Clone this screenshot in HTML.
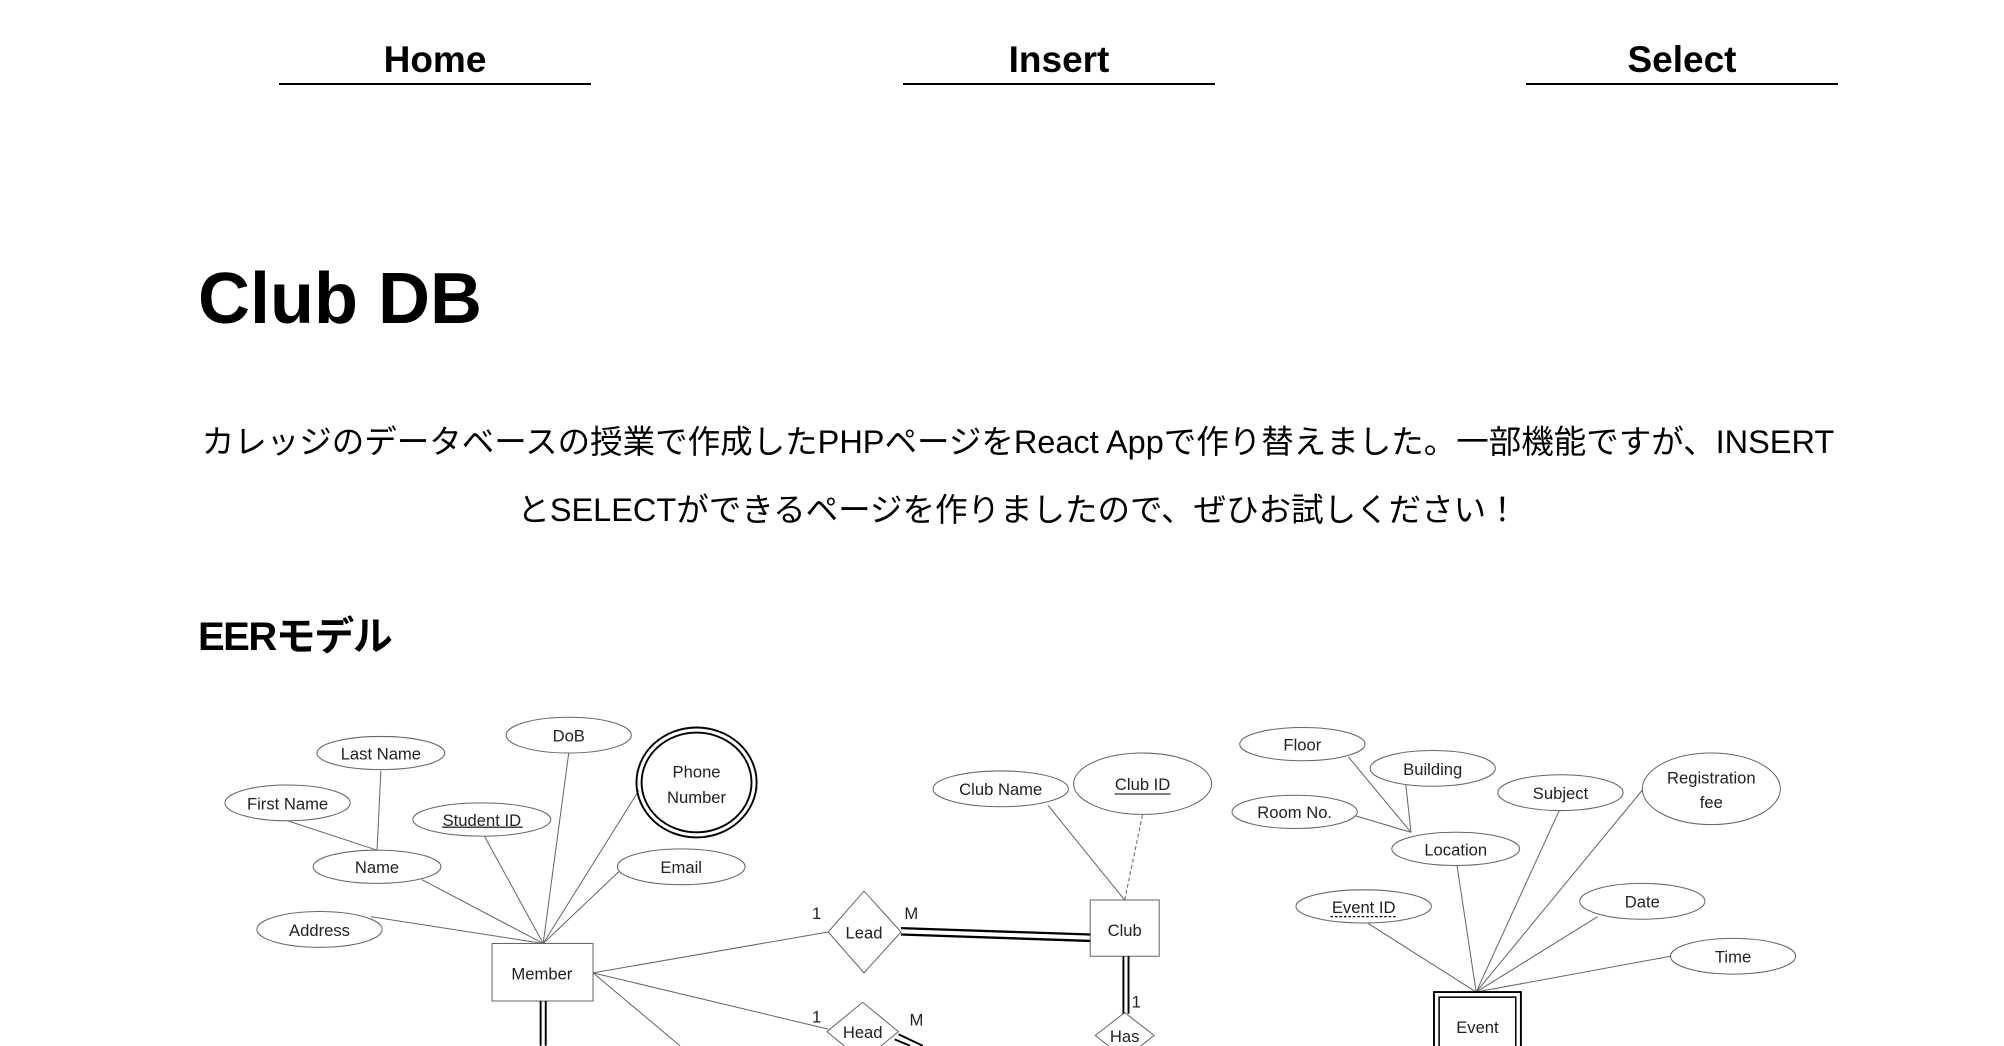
<!DOCTYPE html>
<html><head><meta charset="utf-8"><style>
body{margin:0;width:2004px;height:1046px;background:#fff;overflow:hidden;position:relative;font-family:"Liberation Sans","Noto Sans CJK JP",sans-serif;color:#000}
.nav{position:absolute;top:38px;width:312px;text-align:center;font-weight:bold;font-size:37px;line-height:44px;border-bottom:2px solid #000;padding-bottom:1px}
h1{position:absolute;left:198px;top:254px;margin:0;font-size:72px;line-height:90px;font-weight:bold}
p{position:absolute;left:140px;width:1756px;top:408px;margin:0;text-align:center;font-size:32.5px;line-height:68px;letter-spacing:0px}
h2{position:absolute;left:198px;top:612px;margin:0;font-size:40px;line-height:50px;font-weight:bold;letter-spacing:-1.5px}
svg{position:absolute;left:0;top:0}
</style></head><body>
<div class="nav" style="left:279px">Home</div>
<div class="nav" style="left:903px">Insert</div>
<div class="nav" style="left:1526px">Select</div>
<h1>Club DB</h1>
<p>カレッジのデータベースの授業で作成したPHPページをReact Appで作り替えました。一部機能ですが、INSERT<br>とSELECTができるページを作りましたので、ぜひお試しください！</p>
<h2>EERモデル</h2>
<svg width="2004" height="1046" viewBox="0 0 1568 818" font-family="Liberation Sans Narrow, Liberation Sans, sans-serif" font-size="13" text-anchor="middle">
<g fill="none" stroke="#666" stroke-width="0.8">
<line x1="425" y1="738" x2="330" y2="688"/><line x1="425" y1="738" x2="379" y2="654"/><line x1="425" y1="738" x2="445" y2="589"/><line x1="425" y1="738" x2="500" y2="618"/><line x1="425" y1="738" x2="484" y2="682"/><line x1="425" y1="738" x2="290" y2="717"/>
<line x1="295" y1="665" x2="225" y2="642"/><line x1="295" y1="665" x2="298" y2="603"/>
<line x1="464" y1="761" x2="648" y2="729"/><line x1="464" y1="761" x2="648" y2="805"/><line x1="464" y1="761" x2="532" y2="818"/>
<line x1="880" y1="704" x2="820" y2="630"/><line x1="880" y1="704" x2="894" y2="637" stroke-dasharray="3,2"/>
<line x1="1055" y1="592" x2="1104" y2="651"/><line x1="1100" y1="614" x2="1104" y2="651"/><line x1="1060" y1="638" x2="1104" y2="651"/>
<line x1="1140" y1="677" x2="1155" y2="776"/><line x1="1220" y1="634" x2="1155" y2="776"/><line x1="1285" y1="618" x2="1155" y2="776"/><line x1="1070" y1="722" x2="1155" y2="776"/><line x1="1250" y1="717" x2="1155" y2="776"/><line x1="1307" y1="748" x2="1155" y2="776"/>
<ellipse cx="298" cy="589" rx="50" ry="13"/><ellipse cx="445" cy="575" rx="49" ry="14"/><ellipse cx="225" cy="628" rx="49" ry="14"/><ellipse cx="377" cy="641" rx="54" ry="13"/><ellipse cx="295" cy="678" rx="50" ry="13"/><ellipse cx="533" cy="678" rx="50" ry="14"/><ellipse cx="250" cy="727" rx="49" ry="14"/>
<ellipse cx="783" cy="617" rx="53" ry="14"/><ellipse cx="894" cy="613" rx="54" ry="24"/>
<ellipse cx="1019" cy="582" rx="49" ry="13"/><ellipse cx="1121" cy="601" rx="49" ry="14"/><ellipse cx="1013" cy="635" rx="49" ry="13"/><ellipse cx="1139" cy="664" rx="50" ry="13"/><ellipse cx="1221" cy="620" rx="49" ry="14"/><ellipse cx="1339" cy="617" rx="54" ry="28"/>
<ellipse cx="1067" cy="709" rx="53" ry="13"/><ellipse cx="1285" cy="705" rx="49" ry="14"/><ellipse cx="1356" cy="748" rx="49" ry="14"/>
<rect x="385" y="738" width="79" height="45"/><rect x="853" y="704" width="54" height="44"/>
<polygon points="648,729 676,697 705,729 676,761"/><polygon points="647,807 675,784 703,807 675,830"/><polygon points="857,810 880,792 903,810 880,828"/>
</g>
<g fill="none" stroke="#000">
<ellipse cx="545" cy="612" rx="47" ry="43" stroke-width="1.5"/><ellipse cx="545" cy="612" rx="43" ry="39" stroke-width="1.5"/>
<line x1="423" y1="783" x2="423" y2="818" stroke-width="1.5"/><line x1="427" y1="783" x2="427" y2="818" stroke-width="1.5"/>
<line x1="705" y1="726" x2="853" y2="731" stroke-width="1.8"/><line x1="705" y1="731" x2="853" y2="736" stroke-width="1.8"/>
<line x1="879" y1="748" x2="879" y2="793" stroke-width="1.5"/><line x1="883" y1="748" x2="883" y2="793" stroke-width="1.5"/>
<line x1="700" y1="813" x2="712" y2="818" stroke-width="1.5"/><line x1="703" y1="809" x2="722" y2="818" stroke-width="1.5"/>
<rect x="1122" y="776" width="68" height="60" stroke-width="1.5"/><rect x="1126" y="780" width="60" height="56" stroke-width="1.2"/>
<line x1="346" y1="647" x2="409" y2="647" stroke-width="0.8"/><line x1="872" y1="621" x2="916" y2="621" stroke-width="0.8"/>
<line x1="1041" y1="717" x2="1093" y2="717" stroke-width="1" stroke-dasharray="2,1.5"/>
</g>
<g fill="#222">
<text x="298" y="594">Last Name</text><text x="445" y="580">DoB</text><text x="545" y="608">Phone</text><text x="545" y="628">Number</text>
<text x="225" y="633">First Name</text><text x="377" y="646">Student ID</text><text x="295" y="683">Name</text><text x="533" y="683">Email</text><text x="250" y="732">Address</text>
<text x="424" y="766">Member</text><text x="676" y="734">Lead</text><text x="675" y="812">Head</text><text x="880" y="815">Has</text>
<text x="880" y="732">Club</text><text x="783" y="622">Club Name</text><text x="894" y="618">Club ID</text>
<text x="639" y="719">1</text><text x="713" y="719">M</text><text x="639" y="800">1</text><text x="717" y="802">M</text><text x="889" y="788">1</text>
<text x="1019" y="587">Floor</text><text x="1121" y="606">Building</text><text x="1013" y="640">Room No.</text><text x="1139" y="669">Location</text><text x="1221" y="625">Subject</text>
<text x="1339" y="613">Registration</text><text x="1339" y="632">fee</text><text x="1067" y="714">Event ID</text><text x="1285" y="710">Date</text><text x="1356" y="753">Time</text>
<text x="1156" y="808">Event</text>
</g>
</svg>
</body></html>
